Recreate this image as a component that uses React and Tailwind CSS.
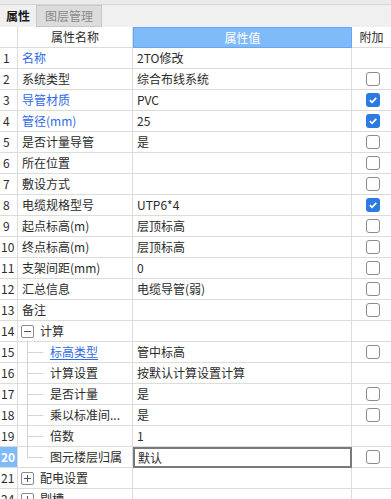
import React from "react";

const rows = [
  { n: 1, name: "名称", blue: true, value: "2TO修改", cb: null },
  { n: 2, name: "系统类型", value: "综合布线系统", cb: false },
  { n: 3, name: "导管材质", blue: true, value: "PVC", cb: true },
  { n: 4, name: "管径(mm)", blue: true, value: "25", cb: true },
  { n: 5, name: "是否计量导管", value: "是", cb: false },
  { n: 6, name: "所在位置", value: "", cb: false },
  { n: 7, name: "敷设方式", value: "", cb: false },
  { n: 8, name: "电缆规格型号", value: "UTP6*4", cb: true },
  { n: 9, name: "起点标高(m)", value: "层顶标高", cb: false },
  { n: 10, name: "终点标高(m)", value: "层顶标高", cb: false },
  { n: 11, name: "支架间距(mm)", value: "0", cb: false },
  { n: 12, name: "汇总信息", value: "电缆导管(弱)", cb: false },
  { n: 13, name: "备注", value: "", cb: false },
  { n: 14, name: "计算", group: "minus", value: "", cb: null },
  { n: 15, name: "标高类型", child: true, blue: true, underline: true, value: "管中标高", cb: false },
  { n: 16, name: "计算设置", child: true, value: "按默认计算设置计算", cb: null },
  { n: 17, name: "是否计量", child: true, value: "是", cb: false },
  { n: 18, name: "乘以标准间...", child: true, value: "是", cb: false },
  { n: 19, name: "倍数", child: true, value: "1", cb: null },
  { n: 20, name: "图元楼层归属", child: true, last: true, value: "默认", cb: false, selected: true },
  { n: 21, name: "配电设置", group: "plus", value: "", cb: null },
  { n: 24, name: "剔槽", group: "plus", value: "", cb: null },
];

function Checkbox({ checked }) {
  if (checked) {
    return (
      <div className="w-[14px] h-[14px] rounded-[3px] bg-[#2b7be3] flex items-center justify-center">
        <svg width="10" height="10" viewBox="0 0 10 10">
          <path d="M1.8 5.2 L4 7.3 L8.3 2.8" fill="none" stroke="white" strokeWidth="1.8" />
        </svg>
      </div>
    );
  }
  return <div className="w-[14px] h-[14px] rounded-[3px] border border-[#8c8c8c] bg-white" />;
}

function ExpandBox({ type }) {
  return (
    <div className="w-[13px] h-[13px] rounded-[2px] border border-[#8a8a8a] bg-white relative">
      <div className="absolute left-[2px] right-[2px] top-[5px] h-px bg-[#555]" />
      {type === "plus" && <div className="absolute top-[2px] bottom-[2px] left-[5px] w-px bg-[#555]" />}
    </div>
  );
}

export default function App() {
  return (
    <div
      className="w-[391px] h-[499px] overflow-hidden bg-white text-[12px] text-[#2b2b2b]"
      style={{ fontFamily: '"Noto Sans CJK SC", "Microsoft YaHei", sans-serif' }}
    >
      <div className="h-[5px] bg-[#ebebeb] border-b border-[#d6d6d6]" />
      <div className="h-[22px] bg-[#f0f0f0] flex items-stretch">
        <div className="w-[36px] flex items-center justify-center font-bold text-[#1a1a1a]">属性</div>
        <div className="w-[66px] flex items-center justify-center bg-[#dcdcdc] border border-[#c9c9c9] text-[#8a8a8a]">
          图层管理
        </div>
      </div>
      <div className="grid grid-cols-[18px_115px_219px_39px]">
        <div className="h-[21px] border-r border-b border-[#dcdcdc] bg-white" />
        <div className="h-[21px] border-r border-b border-[#dcdcdc] bg-white flex items-center justify-center">
          属性名称
        </div>
        <div className="h-[21px] border border-[#66a6f2] bg-[#80bbf9] text-white flex items-center justify-center">
          属性值
        </div>
        <div className="h-[21px] border-b border-[#dcdcdc] bg-white flex items-center justify-center">附加</div>

        {rows.map((r) => (
          <React.Fragment key={r.n}>
            <div
              className={
                "h-[21px] border-r border-b border-[#dcdcdc] flex items-center leading-none " +
                (r.selected ? "bg-[#80bbf9] text-white font-bold pl-[1px]" : r.n >= 10 ? "pl-[1px]" : "pl-[3px]")
              }
            >
              {r.n}
            </div>
            <div className="h-[21px] border-r border-b border-[#dcdcdc] flex items-center relative">
              {r.group && (
                <div className="flex items-center pl-[3px] gap-[6px]">
                  <ExpandBox type={r.group} />
                  <span>{r.name}</span>
                </div>
              )}
              {r.child && (
                <>
                  <div
                    className={
                      "absolute left-[9px] w-px bg-[#d4d4d4] top-[-1px] " + (r.last ? "h-[11px]" : "bottom-[-1px]")
                    }
                  />
                  <div className="absolute left-[9px] top-[10px] w-[16px] h-px bg-[#d4d4d4]" />
                  <span
                    className={
                      "pl-[32px] " + (r.blue ? "text-[#2f6ae6] " : "") + (r.underline ? "underline underline-offset-2" : "")
                    }
                  >
                    {r.name}
                  </span>
                </>
              )}
              {!r.group && !r.child && (
                <span className={"pl-[4px] " + (r.blue ? "text-[#2f6ae6]" : "")}>{r.name}</span>
              )}
            </div>
            <div
              className={
                "h-[21px] flex items-center " +
                (r.selected ? "border-2 border-[#7a7a7a] pl-[3px]" : "border-r border-b border-[#dcdcdc] pl-[4px]")
              }
            >
              {r.value}
            </div>
            <div className="h-[21px] border-b border-[#dcdcdc] flex items-center pl-[14px]">
              {r.cb !== null && <Checkbox checked={r.cb} />}
            </div>
          </React.Fragment>
        ))}
      </div>
    </div>
  );
}
